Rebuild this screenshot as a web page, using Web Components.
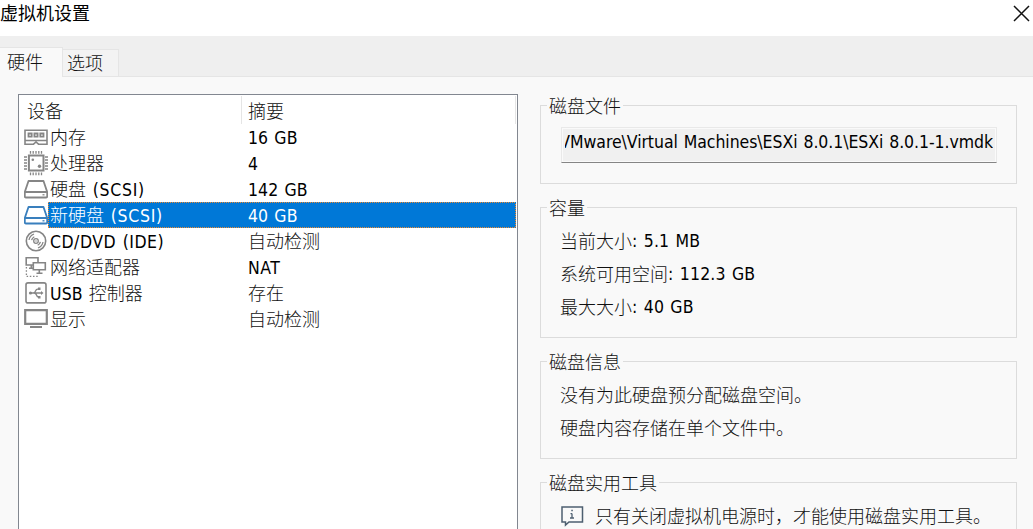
<!DOCTYPE html>
<html lang="zh-CN">
<head>
<meta charset="utf-8">
<title>虚拟机设置</title>
<style>
html,body{margin:0;height:529px;overflow:hidden;background:#f9f9f9}
body{font:300 17.5px/26px "DejaVu Sans Condensed","Noto Sans CJK SC",sans-serif;color:#000}
</style>
</head>
<body>
<vm-settings></vm-settings>
<script>
const define = (name, html, setup) => customElements.define(name, class extends HTMLElement {
  connectedCallback() {
    if (this.shadowRoot) return;
    const t = document.createElement('template');
    t.innerHTML = html;
    this.attachShadow({mode: 'open'}).append(t.content.cloneNode(true));
    if (setup) setup(this, this.shadowRoot);
  }
});

// Chinese text run, on an 18px pitch
define('zh-text', `<style>:host{display:inline-block;margin-top:-1px;font:300 18px/26px "Noto Sans CJK SC",sans-serif;color:var(--zh,#111);white-space:nowrap;vertical-align:top}</style><slot></slot>`);
// Latin text run; the host may set --ls for its letter spacing
define('en-text', `<style>:host{display:inline-block;margin-top:var(--en-top,0);font:400 17.5px/26px "DejaVu Sans Condensed","DejaVu Sans",sans-serif;font-stretch:condensed;letter-spacing:var(--ls,.1px);word-spacing:1px;white-space:pre;vertical-align:top}</style><slot></slot>`);

const ICONS = {
  memory: `<path d="M1 6.200h22v14H14.500l-2.500-2.200-2.500 2.200H1zM1 16.500h22" stroke-width="1.600"/><path d="M4.500 9.500h3.200v3.200H4.500zM10.400 9.500h3.200v3.200h-3.200zM16.300 9.500h3.200v3.200h-3.200z" stroke-width="1.800"/>`,
  cpu: `<path d="M4.900 5.500h14.600v15H4.900z" stroke-width="2"/><path d="M6.500 1v2.700M9.200 1v2.700M12 1v2.700M14.800 1v2.700M17.500 1v2.700M6.500 22.500v2.700M9.200 22.500v2.700M12 22.500v2.700M14.800 22.500v2.700M17.500 22.500v2.700M0 7h3M0 10h3M0 13h3M0 16h3M0 19h3M21 7h3M21 10h3M21 13h3M21 16h3M21 19h3"/><circle cx="8.800" cy="9.700" r="1.300" fill="currentColor" stroke="none"/><circle cx="15.500" cy="16.300" r="1.700" fill="currentColor" stroke="none"/>`,
  disk: `<path d="M4.500 5h15l3.700 11v4.500q0 1-1 1H1.800q-1 0-1-1V16zM1 16h22" stroke-width="1.800" stroke-linejoin="round"/><path d="M18.500 18.800h2"/>`,
  cd: `<circle cx="12" cy="13" r="9.700" stroke-width="1.600"/><circle cx="12" cy="13" r="2.300"/><circle cx="12" cy="13" r=".7" fill="currentColor" stroke="none"/><path d="M5 12q.7-4.300 5-6M7.600 12.200q.5-2.300 2.700-3.500M19 14q-.7 4.300-5 6M16.400 13.800q-.5 2.300-2.700 3.500"/>`,
  net: `<path d="M8.700 11H2.200V3.700h11.800v4.500M5 14.200h3.500M7.300 11v3M9.300 8.700h12v7H9.300zM15.300 15.700v3.500M12.500 19.300h6" stroke-width="1.600"/><path d="M2.400 13v9.400H15" stroke-dasharray="1.500 1.700"/>`,
  usb: `<rect x="2" y="2.900" width="20" height="20" rx="2" stroke-width="1.600"/><path d="M6 13h12M9 13q2 0 2.500-2t3-2.200M10 13q2 0 2.500 2t2.500 2.200"/><circle cx="6.500" cy="13" r="1.600" fill="currentColor" stroke="none"/><path d="M14 7.500h2.500V10H14zM14 16h2.500v2.500H14zM17 11l2.500 2-2.500 2z" fill="currentColor" stroke="none"/>`,
  display: `<path d="M1.200 4.200h21.600v13.600H1.200z" stroke-width="2.200"/><path d="M6 21h12" stroke-width="2"/>`
};
define('device-icon', `<style>:host{display:block;width:24px;height:26px;color:#858585}svg{display:block}</style><svg width="24" height="26" viewBox="0 0 24 26" fill="none" stroke="currentColor" stroke-width="1.300"></svg>`,
  (el, r) => { r.querySelector('svg').innerHTML = ICONS[el.getAttribute('name')]; });

define('device-row', `<style>
:host{display:flex;height:26px;padding-left:5px;--en-top:1px}
.line{flex:1;display:flex;box-sizing:border-box;margin-right:1px;padding-left:2px}
.name{width:198px;white-space:nowrap;flex:none}
:host([selected]) device-icon{color:#397fbd}
:host([selected]) .line{background:repeating-linear-gradient(90deg,#ed8b32 0 1px,#0078d7 1px 2px) 0 0/100% 1px no-repeat,repeating-linear-gradient(90deg,#ed8b32 0 1px,#0078d7 1px 2px) 0 100%/100% 1px no-repeat,repeating-linear-gradient(#ed8b32 0 1px,#0078d7 1px 2px) 0 0/1px 100% no-repeat,repeating-linear-gradient(#ed8b32 0 1px,#0078d7 1px 2px) 100% 0/1px 100% no-repeat,#0078d7;color:#fff;--zh:#fff}
</style><div class="line"><div class="name"><slot></slot></div><slot name="value"></slot></div>`,
  (el, r) => {
    const icon = document.createElement('device-icon');
    icon.setAttribute('name', el.getAttribute('icon'));
    r.querySelector('.line').before(icon);
  });

define('device-list', `<style>
:host{display:block;box-sizing:border-box;width:500px;height:460px;border:1px solid #828790;background:#fff}
.head{display:flex;height:29px}
.head div{box-sizing:border-box;height:28px;margin-top:1px;border-right:1px solid #e5e5e5;padding-top:2px}
.a{width:223px;padding-left:8px}.b{width:274px;padding-left:6px}
</style><div class="head"><div class="a"><zh-text>设备</zh-text></div><div class="b"><zh-text>摘要</zh-text></div></div><slot></slot>`);

define('group-box', `<style>
:host{display:block;box-sizing:border-box;width:477px;border:1px solid #dcdcdc}
.legend{display:block;width:max-content;height:26px;margin:-13px 0 0 6px;padding:0 2px;background:#f9f9f9}
</style><div class="legend"><slot name="legend"></slot></div><slot></slot>`);

define('path-field', `<style>
:host{display:flex;justify-content:flex-end;box-sizing:border-box;width:436px;height:36px;margin:8px 0 0 20px;padding:1px 3px 0;border:1px solid #e9e9e9;border-bottom-color:#858585;background:#f0f0f0;box-shadow:inset 0 0 0 1px #fafafa;--ls:-.06px}
div{width:428px;overflow:hidden;display:flex;justify-content:flex-end}
</style><div><slot></slot></div>`);

define('text-lines', `<style>:host{display:flex;flex-direction:column;gap:7px;padding:7px 0 0 19px}</style><slot></slot>`);
define('text-line', `<style>:host{display:flex;height:26px;white-space:nowrap}</style><slot></slot>`);

define('info-note', `<style>:host{display:flex;padding:7px 0 0 20px;white-space:nowrap}svg{margin:2px 11px 0 0;flex:none}</style>
<svg width="23" height="22" viewBox="0 0 23 22" fill="none" stroke="#4d5f70" stroke-width="1.500"><path d="M1 2h20.500v15H8l-3.500 3v-3H1z"/><path d="M11 8.500v4.500M9.500 8.700H11M9 13h4M10.300 5.500h1.500" stroke-width="1.300"/></svg><slot></slot>`);

define('title-bar', `<style>:host{display:flex;justify-content:space-between;height:36px;background:#fff}
span{font:400 18px/26px "Noto Sans CJK SC",sans-serif;margin-top:-1px}svg{margin:5px 3px 0 0}</style>
<span><slot></slot></span><svg width="17" height="17" viewBox="0 0 17 17"><path d="M1 1l15 15M16 1L1 16" stroke="#111" stroke-width="1.500"/></svg>`);

define('tab-bar', `<style>:host{display:flex;align-items:flex-end;box-sizing:border-box;height:41px;background:linear-gradient(#e5e5e5,#e5e5e5) 0 100%/100% 1px no-repeat,#efefef}
div{box-sizing:border-box}
.on{width:63px;height:30px;background:#f9f9f9;border:solid #e5e5e5;border-width:1px 1px 0 0;padding:1px 0 0 7px}
.off{width:56px;height:28px;background:#f3f3f3;border:1px solid #e5e5e5;border-left:0;padding:0 0 0 4px}</style>
<div class="on"><slot name="active"></slot></div><div class="off"><slot></slot></div>`);

define('vm-settings', `<style>
:host{display:block;width:1033px;height:529px;overflow:hidden;background:#f9f9f9}
.body{display:flex;gap:22px;padding:17px 0 0 18px}
.side{display:flex;flex-direction:column;gap:23px;padding-top:11px}
.g1{height:79px}.g2{height:131px}.g3{height:98px}.g4{height:100px}
.scsi{--ls:.7px}.caps{--ls:.5px}.gb{--ls:.1px}.usb{--ls:.1px}.size{--ls:.2px}
</style>
<title-bar>虚拟机设置</title-bar>
<tab-bar><zh-text slot="active">硬件</zh-text><zh-text>选项</zh-text></tab-bar>
<div class="body">
<device-list>
<device-row icon="memory"><zh-text>内存</zh-text><en-text class="gb" slot="value">16 GB</en-text></device-row>
<device-row icon="cpu"><zh-text>处理器</zh-text><en-text slot="value">4</en-text></device-row>
<device-row icon="disk"><zh-text>硬盘</zh-text><en-text class="scsi"> (SCSI)</en-text><en-text class="gb" slot="value">142 GB</en-text></device-row>
<device-row icon="disk" selected><zh-text>新硬盘</zh-text><en-text class="scsi"> (SCSI)</en-text><en-text class="gb" slot="value">40 GB</en-text></device-row>
<device-row icon="cd"><en-text class="caps">CD/DVD (IDE)</en-text><zh-text slot="value">自动检测</zh-text></device-row>
<device-row icon="net"><zh-text>网络适配器</zh-text><en-text class="caps" slot="value">NAT</en-text></device-row>
<device-row icon="usb"><en-text class="usb">USB </en-text><zh-text>控制器</zh-text><zh-text slot="value">存在</zh-text></device-row>
<device-row icon="display"><zh-text>显示</zh-text><zh-text slot="value">自动检测</zh-text></device-row>
</device-list>
<div class="side">
<group-box class="g1"><zh-text slot="legend">磁盘文件</zh-text><path-field><en-text>VMware\\Virtual Machines\\ESXi 8.0.1\\ESXi 8.0.1-1.vmdk</en-text></path-field></group-box>
<group-box class="g2"><zh-text slot="legend">容量</zh-text><text-lines>
<text-line><zh-text>当前大小</zh-text><en-text class="size">: 5.1 MB</en-text></text-line>
<text-line><zh-text>系统可用空间</zh-text><en-text class="size">: 112.3 GB</en-text></text-line>
<text-line><zh-text>最大大小</zh-text><en-text class="size">: 40 GB</en-text></text-line></text-lines></group-box>
<group-box class="g3"><zh-text slot="legend">磁盘信息</zh-text><text-lines>
<text-line><zh-text>没有为此硬盘预分配磁盘空间。</zh-text></text-line>
<text-line><zh-text>硬盘内容存储在单个文件中。</zh-text></text-line></text-lines></group-box>
<group-box class="g4"><zh-text slot="legend">磁盘实用工具</zh-text><info-note><zh-text>只有关闭虚拟机电源时，才能使用磁盘实用工具。</zh-text></info-note></group-box>
</div></div>`);
</script>
</body>
</html>
